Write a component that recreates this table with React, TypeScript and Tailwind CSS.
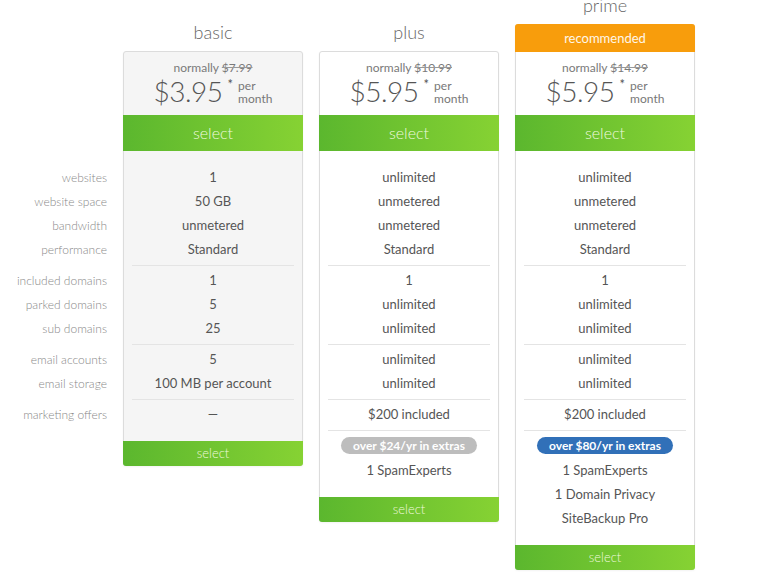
import React from "react";

type Plan = {
  name: string;
  was: string;
  price: string;
  bg: string;
  recommended?: boolean;
  groups: string[][];
  badge?: { text: string; color: string };
  extras?: string[];
};

const labels = [
  ["websites", "website space", "bandwidth", "performance"],
  ["included domains", "parked domains", "sub domains"],
  ["email accounts", "email storage"],
  ["marketing offers"],
];

const plans: Plan[] = [
  {
    name: "basic",
    was: "$7.99",
    price: "$3.95",
    bg: "bg-[#f5f5f5]",
    groups: [
      ["1", "50 GB", "unmetered", "Standard"],
      ["1", "5", "25"],
      ["5", "100 MB per account"],
      ["—"],
    ],
  },
  {
    name: "plus",
    was: "$10.99",
    price: "$5.95",
    bg: "bg-white",
    groups: [
      ["unlimited", "unmetered", "unmetered", "Standard"],
      ["1", "unlimited", "unlimited"],
      ["unlimited", "unlimited"],
      ["$200 included"],
    ],
    badge: { text: "over $24/yr in extras", color: "bg-[#bdbdbd]" },
    extras: ["1 SpamExperts"],
  },
  {
    name: "prime",
    was: "$14.99",
    price: "$5.95",
    bg: "bg-white",
    recommended: true,
    groups: [
      ["unlimited", "unmetered", "unmetered", "Standard"],
      ["1", "unlimited", "unlimited"],
      ["unlimited", "unlimited"],
      ["$200 included"],
    ],
    badge: { text: "over $80/yr in extras", color: "bg-[#3170b8]" },
    extras: ["1 SpamExperts", "1 Domain Privacy", "SiteBackup Pro"],
  },
];

function Group({
  first,
  children,
  line = true,
}: {
  first?: boolean;
  children: React.ReactNode;
  line?: boolean;
}) {
  return (
    <div
      className={
        first
          ? ""
          : line
          ? "mx-[8px] mt-[4px] border-t border-[#e4e4e4] pt-[2px]"
          : "mt-[4px] border-t border-transparent pt-[2px]"
      }
    >
      {children}
    </div>
  );
}

function Card({ plan }: { plan: Plan }) {
  return (
    <div className="flex w-[180px] flex-col">
      <div
        className={`${
          plan.recommended ? "mt-[-5px]" : "mt-[22px]"
        } mb-[9px] h-[20px] text-center text-[18px] font-light leading-[20px] text-[#666]`}
      >
        {plan.name}
      </div>
      <div
        className={`${plan.bg} rounded-[3px] border border-[#dcdcdc] shadow-[0_1px_2px_rgba(0,0,0,0.05)]`}
      >
        {plan.recommended && (
          <div className="-mx-px -mt-px h-[28px] rounded-t-[3px] bg-[#f89d0c] text-center text-[13px] leading-[28px] text-[#fff7e8]">
            recommended
          </div>
        )}
        <div className="flex h-[63px] flex-col items-center pt-[9px]">
          <div className="text-[12px] leading-[14px] text-[#7a7a7a]">
            normally <span className="line-through decoration-[#999]">{plan.was}</span>
          </div>
          <div className="flex items-start">
            <span className="text-[28px] font-light leading-[32px] tracking-[-0.5px] text-[#555]">
              {plan.price}
            </span>
            <span className="ml-[5px] mt-[2px] text-[13px] leading-[14px] text-[#555]">
              *
            </span>
            <span className="ml-[5px] mt-[4px] flex flex-col text-[12px] leading-[13px] text-[#777]">
              <span>per</span>
              <span>month</span>
            </span>
          </div>
        </div>
        <div className="-mx-px flex h-[36px] items-center justify-center bg-gradient-to-r from-[#5bb72e] to-[#86d233] text-[16px] font-light text-[#eef9de]">
          select
        </div>
        <div className="pt-[14px] pb-[15px] text-center text-[13px] text-[#555]">
          {plan.groups.map((g, i) => (
            <Group key={i} first={i === 0}>
              {g.map((v, j) => (
                <div key={j} className="h-[24px] leading-[24px]">
                  {v}
                </div>
              ))}
            </Group>
          ))}
          {plan.badge && (
            <Group>
              <div className="flex h-[25px] items-center justify-center">
                <span
                  className={`${plan.badge.color} rounded-full px-[12px] text-[12px] font-bold leading-[17px] text-white`}
                >
                  {plan.badge.text}
                </span>
              </div>
              {plan.extras?.map((e) => (
                <div key={e} className="h-[24px] leading-[24px]">
                  {e}
                </div>
              ))}
            </Group>
          )}
        </div>
        <div className="-mx-px -mb-px flex h-[25px] items-center justify-center rounded-b-[3px] bg-gradient-to-r from-[#5bb72e] to-[#86d233] text-[13px] font-light text-[#eef9de]">
          select
        </div>
      </div>
    </div>
  );
}

export default function App() {
  return (
    <main
      className="min-h-[585px] w-[757px] bg-white"
      style={{ fontFamily: "Lato, 'Open Sans', sans-serif" }}
    >
      <div className="flex items-start gap-[16px]">
        <div className="w-[107px] shrink-0 pt-[166px] text-right text-[12px] font-light text-[#888]">
          {labels.map((g, i) => (
            <Group key={i} first={i === 0} line={false}>
              {g.map((l) => (
                <div key={l} className="h-[24px] leading-[24px]">
                  {l}
                </div>
              ))}
            </Group>
          ))}
        </div>
        {plans.map((p) => (
          <Card key={p.name} plan={p} />
        ))}
      </div>
    </main>
  );
}
